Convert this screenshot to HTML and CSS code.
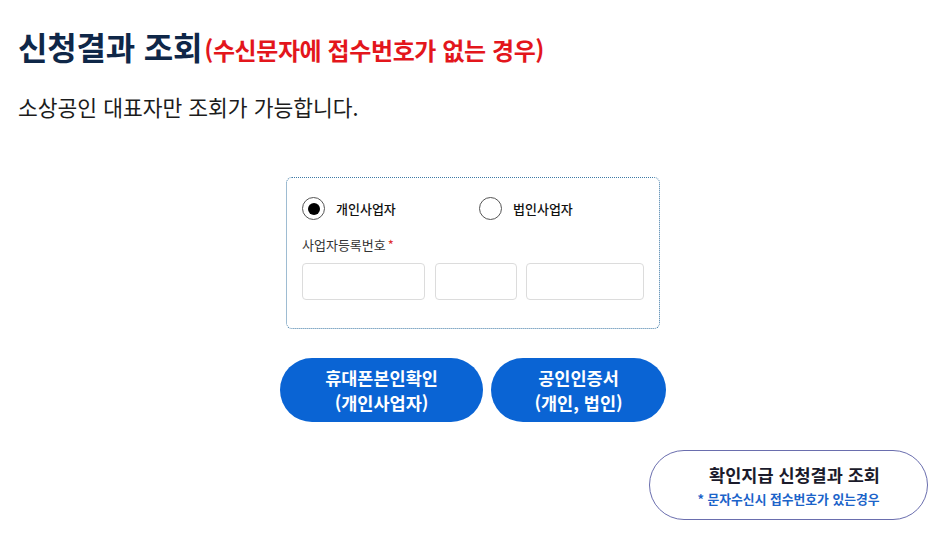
FILE: index.html
```html
<!DOCTYPE html>
<html lang="ko">
<head>
    <meta charset="UTF-8">
    <meta name="viewport" content="width=device-width, initial-scale=1.0">
    <title>신청결과 조회</title>
    <link rel="stylesheet" href="styles.css">
</head>
<body>
    <div class="page">
        <h1 class="title">신청결과 조회<span class="title-sub">(수신문자에 접수번호가 없는 경우)</span></h1>
        <p class="desc">소상공인 대표자만 조회가 가능합니다.</p>

        <div class="form-box">
            <div class="radios">
                <label class="radio radio-first">
                    <span class="circle on"></span>
                    <span>개인사업자</span>
                </label>
                <label class="radio">
                    <span class="circle"></span>
                    <span>법인사업자</span>
                </label>
            </div>
            <div class="field-label">사업자등록번호<span class="req">*</span></div>
            <div class="inputs">
                <input type="text" class="in in1">
                <input type="text" class="in in2">
                <input type="text" class="in in3">
            </div>
        </div>

        <div class="btns">
            <button class="btn btn1">휴대폰본인확인<br>(개인사업자)</button>
            <button class="btn btn2">공인인증서<br>(개인, 법인)</button>
        </div>

        <div class="bottom">
            <button class="btn-line">
                <span class="line-main">확인지급 신청결과 조회</span>
                <span class="line-sub">* 문자수신시 접수번호가 있는경우</span>
            </button>
        </div>
    </div>
</body>
</html>
```

FILE: styles.css
```css
*{
    margin: 0;
    padding: 0;
    box-sizing: border-box;
}
body{
    background: #fff;
    font-family: "Noto Sans CJK KR", "Noto Sans", sans-serif;
    color: #222;
}
.page{
    width: 944px;
    padding: 26px 16px 0 18px;
}
.title{
    font-size: 32px;
    font-weight: 700;
    color: #0f2748;
    line-height: 40px;
    letter-spacing: -0.2px;
}
.title-sub{
    font-size: 24px;
    color: #e3161c;
    margin-left: 2px;
    letter-spacing: -0.4px;
}
.desc{
    margin-top: 22px;
    font-size: 21.5px;
    line-height: 30px;
    color: #1c1c1c;
}

.form-box{
    width: 374px;
    height: 152px;
    margin: 55px auto 0;
    border: 1px dotted #3f7aa6;
    border-radius: 6px;
    padding: 19px 15px 27px 15px;
}
.radios{
    display: flex;
    align-items: center;
}
.radio{
    display: flex;
    align-items: center;
    gap: 11px;
    font-size: 13px;
    font-weight: 500;
    color: #111;
}
.radio-first{
    width: 177px;
}
.circle{
    width: 23px;
    height: 23px;
    border: 1px solid #555;
    border-radius: 50%;
    display: flex;
    align-items: center;
    justify-content: center;
}
.circle.on::after{
    content: "";
    width: 12px;
    height: 12px;
    border-radius: 50%;
    background: #000;
}
.field-label{
    margin-top: 16px;
    font-size: 13px;
    color: #333;
    line-height: 18px;
}
.req{
    color: #e0312f;
    margin-left: 2px;
}
.inputs{
    display: flex;
    margin-top: 9px;
}
.in{
    height: 37px;
    border: 1px solid #dcdcdc;
    border-radius: 4px;
    background: #fff;
}
.in1{ width: 123px; }
.in2{ width: 82px; margin-left: 10px; }
.in3{ width: 118px; margin-left: 9px; }

.btns{
    display: flex;
    justify-content: center;
    gap: 8px;
    margin-top: 29px;
}
.btn{
    height: 64px;
    border: none;
    border-radius: 32px;
    background: #0a64d4;
    color: #fff;
    font-family: inherit;
    font-size: 17.5px;
    font-weight: 700;
    line-height: 25px;
}
.btn1{ width: 203px; }
.btn2{ width: 175px; }

.bottom{
    display: flex;
    justify-content: flex-end;
    margin-top: 28px;
}
.btn-line{
    width: 279px;
    height: 70px;
    border: 1px solid #6a6eae;
    border-radius: 35px;
    background: #fff;
    font-family: inherit;
    display: flex;
    flex-direction: column;
    align-items: center;
    justify-content: center;
}
.line-main{
    font-size: 17.5px;
    font-weight: 700;
    color: #1b1b2b;
    line-height: 24px;
    margin-left: 12px;
}
.line-sub{
    font-size: 12.8px;
    font-weight: 700;
    color: #1b63c9;
    line-height: 18px;
    margin-top: 3px;
}
```
